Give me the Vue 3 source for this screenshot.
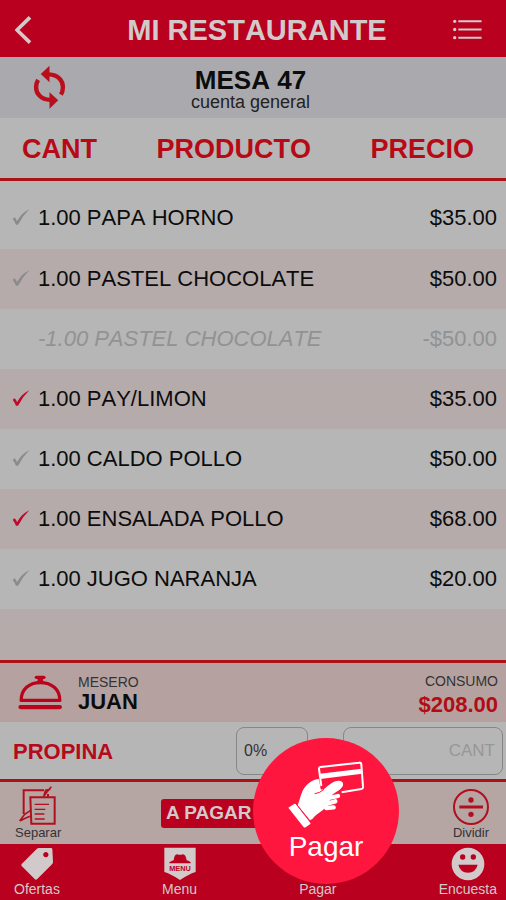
<!-- eslint-disable vue/multi-word-component-names -->
<script setup>

import { ref, reactive } from 'vue'

const restaurant = 'MI RESTAURANTE'

const table = reactive({
  name: 'MESA 47',
  account: 'cuenta general',
  waiter: 'JUAN',
  total: '$208.00',
})

// status: pending, done or cancelled
const items = ref([
  { qty: '1.00', product: 'PAPA HORNO', price: '$35.00', status: 'pending' },
  { qty: '1.00', product: 'PASTEL CHOCOLATE', price: '$50.00', status: 'pending' },
  { qty: '-1.00', product: 'PASTEL CHOCOLATE', price: '-$50.00', status: 'cancelled' },
  { qty: '1.00', product: 'PAY/LIMON', price: '$35.00', status: 'done' },
  { qty: '1.00', product: 'CALDO POLLO', price: '$50.00', status: 'pending' },
  { qty: '1.00', product: 'ENSALADA POLLO', price: '$68.00', status: 'done' },
  { qty: '1.00', product: 'JUGO NARANJA', price: '$20.00', status: 'pending' },
])

const tips = [0, 10, 15, 20]
const tip = ref(0)
const amount = ref('')

</script>




<template>
  <div class="app">

    <header class="topbar">
      <button class="back" type="button" aria-label="Regresar">
        <svg width="18" height="28" viewBox="46 48 54 84">
          <path d="M91 52 L52 90 L91 128" fill="none" stroke="currentColor" stroke-width="11" />
        </svg>
      </button>
      <h1>{{ restaurant }}</h1>
      <button class="list" type="button" aria-label="Opciones">
        <svg width="31" height="21" viewBox="598 54 94 64">
          <path d="M617 61 H688 M617 86 H688 M617 111 H688" stroke="currentColor" stroke-width="6" />
          <g fill="currentColor">
            <circle cx="606" cy="61" r="5" />
            <circle cx="606" cy="86" r="5" />
            <circle cx="606" cy="111" r="5" />
          </g>
        </svg>
      </button>
    </header>

    <section class="mesa">
      <button class="refresh" type="button" aria-label="Actualizar">
        <svg width="35" height="45" viewBox="98 198 104 134">
          <g fill="none" stroke="currentColor" stroke-width="13">
            <path d="M148 226 C176 227 190 245 190 264 Q190 276 184 286" />
            <path d="M152 302 C124 301 110 283 110 264 Q110 252 116 242" />
          </g>
          <path d="M150 200 V249 L124 225 Z M150 279 V328 L176 303 Z" fill="currentColor" />
        </svg>
      </button>
      <div class="mesa-title">
        <h2>{{ table.name }}</h2>
        <p>{{ table.account }}</p>
      </div>
    </section>

    <main class="order">
      <table>
        <thead>
          <tr>
            <th>CANT</th>
            <th>PRODUCTO</th>
            <th>PRECIO</th>
          </tr>
        </thead>
        <tbody>
          <tr v-for="(item, i) in items" :key="i" :class="item.status">
            <td class="qty">
              <span class="check">
                <svg v-if="item.status !== 'cancelled'" width="18" height="18" viewBox="36 55 54 54">
                  <path d="M38 87 L44 83 Q49 87 51 95 Q66 68 88 59 Q68 78 55 104 Q50 107 47 104 Q44 95 38 87 Z" fill="currentColor" />
                </svg>
              </span>
              {{ item.qty }}
            </td>
            <td class="product">{{ item.product }}</td>
            <td class="price">{{ item.price }}</td>
          </tr>
        </tbody>
      </table>
    </main>

    <section class="summary">
      <svg class="bell" width="46" height="37" viewBox="50 220 138 112">
        <g fill="none" stroke="currentColor" stroke-linecap="round" stroke-linejoin="round">
          <path d="M62 300 C62 266 86 246 120 246 C154 246 179 266 179 300 Z" stroke-width="10" />
          <path d="M60 320 H179" stroke-width="13" />
          <path d="M108 230 H131" stroke-width="10" />
          <path d="M120 230 V244" stroke-width="17" stroke-linecap="butt" />
        </g>
      </svg>
      <div class="waiter">
        <span>MESERO</span>
        <strong>{{ table.waiter }}</strong>
      </div>
      <div class="total">
        <span>CONSUMO</span>
        <strong>{{ table.total }}</strong>
      </div>
    </section>

    <section class="tip">
      <label for="tip">PROPINA</label>
      <select id="tip" v-model="tip">
        <option v-for="t in tips" :key="t" :value="t">{{ t }}%</option>
      </select>
      <input v-model="amount" type="text" placeholder="CANT" aria-label="Cantidad de propina">
    </section>

    <section class="actions">
      <button class="action" type="button">
        <svg width="40" height="40" viewBox="60 45 120 120">
          <g fill="none" stroke="currentColor" stroke-width="6">
            <path d="M77 132 V61 H138 M150 80 V72" />
            <path d="M97 82 H170 V161 H100 Z" />
            <path d="M110 103 H153 M110 118 H142 M110 132 H139 M110 147 H140" stroke-width="4" />
            <path d="M160 50 L151 61 L136 80 M157 58 L143 61 L138 76" stroke-width="5" />
            <path d="M65 153 L80 133 L97 122 M67 152 L82 145 L96 139" stroke-width="5" />
          </g>
        </svg>
        <span>Separar</span>
      </button>
      <button class="to-pay" type="button">A PAGAR</button>
      <button class="action" type="button">
        <svg width="40" height="40" viewBox="153 45 120 120">
          <circle cx="213" cy="111" r="51" fill="none" stroke="currentColor" stroke-width="6" />
          <path d="M178 111 H249" stroke="currentColor" stroke-width="9" />
          <circle cx="213" cy="90" r="8" fill="currentColor" />
          <circle cx="213" cy="133" r="8" fill="currentColor" />
        </svg>
        <span>Dividir</span>
      </button>
    </section>

    <nav class="bottom-nav">
      <a href="#ofertas">
        <svg width="34" height="34" viewBox="56 234 102 102">
          <path d="M61 285 L106 240 Q109 237 113 237 H149 Q153 237 153 241 L155 279 Q155 283 152 286 L107 331 Q103 334 100 330 L61 291 Q59 288 61 285 Z M133 249 a8 8 0 1 0 1 0 Z" fill="currentColor" fill-rule="evenodd" />
        </svg>
        <span>Ofertas</span>
      </a>
      <a href="#menu">
        <svg width="34" height="34" viewBox="104 236 102 102">
          <path d="M108 238 H202 V311 Q180 318 155 335 Q130 318 108 311 Z" fill="currentColor" />
          <path class="cut" d="M136 276 Q138 257 147 258 Q155 261 163 258 Q172 257 175 276 Q182 278 187 282 V285 H123 V282 Q130 278 136 276 Z" />
          <text class="cut" x="155" y="307" text-anchor="middle">MENU</text>
        </svg>
        <span>Menu</span>
      </a>
      <a href="#pagar">
        <svg width="34" height="34" viewBox="0 0 34 34">
          <rect x="4" y="8" width="26" height="18" rx="3" fill="currentColor" />
        </svg>
        <span>Pagar</span>
      </a>
      <a href="#encuesta">
        <svg width="34" height="34" viewBox="155 234 102 102">
          <circle cx="206" cy="285" r="49" fill="currentColor" />
          <g class="cut">
            <circle cx="190" cy="264" r="8" />
            <circle cx="222" cy="264" r="8" />
            <path d="M177 287 H235 Q229 311 206 311 Q183 311 177 287 Z" />
          </g>
        </svg>
        <span>Encuesta</span>
      </a>
    </nav>

    <button class="pay" type="button">
      <svg width="78" height="70" viewBox="130 90 234 210">
        <!-- card -->
        <path d="M233 168 L226 117 Q225 112 231 111 L346 98 Q352 97 353 103 L358 170 Q359 176 353 177 L294 187" fill="none" stroke="currentColor" stroke-width="6" />
        <path d="M228 131 L354 116 L355 131 L230 147 Z" fill="currentColor" />
        <!-- fingers behind the card -->
        <g fill="none" stroke="currentColor" stroke-width="13" stroke-linecap="round">
          <path d="M250 205 L283 198" />
          <path d="M250 221 L275 214" />
          <path d="M248 234 L270 232" />
        </g>
        <!-- hand -->
        <path d="M162 226 C170 206 172 186 184 171 C194 158 209 148 226 147 L231 178 Q238 180 245 174 C256 164 269 153 284 152 C298 151 302 163 295 172 C287 183 273 188 265 195 C258 203 259 216 253 226 C240 242 219 250 207 266 L199 271 Z" fill="currentColor" />
        <path class="line" d="M213 191 Q228 190 241 178" />
        <path d="M134 233 L151 222 Q155 220 158 224 L200 277 Q202 281 199 283 L186 292 Q182 294 179 290 Z" fill="currentColor" />
        <path class="line" d="M157 221 L202 279" />
      </svg>
      <span>Pagar</span>
    </button>

  </div>
</template>




<style>

  body {
    margin: 0;
    background: #b6b6b6;
  }

</style>

<style scoped>

  .app {
    --red: #b9001f;
    --line: #ab1218;
    --light: #d2caca;
    position: relative;
    display: flex;
    flex-direction: column;
    min-height: 100vh;
    background: #b6b6b6;
    color: #0c0c0c;
    font-family: "Liberation Sans", Arial, sans-serif;
    font-kerning: none;
  }

  h1, h2, p {
    margin: 0;
  }

  button {
    padding: 0;
    border: 0;
    background: none;
    color: inherit;
    font-family: inherit;
    cursor: pointer;
  }

  svg {
    display: block;
  }

  .topbar {
    display: grid;
    grid-template-columns: 1fr auto 1fr;
    align-items: center;
    height: 57px;
    padding: 2px 7px 0 15px;
    box-sizing: border-box;
    background: var(--red);
    color: var(--light);

    h1 {
      font-size: 29px;
      line-height: 32px;
    }

    .back {
      justify-self: start;
    }

    .list {
      justify-self: end;
      padding-right: 16px;
    }
  }

  .mesa {
    display: grid;
    grid-template-columns: 1fr auto 1fr;
    align-items: center;
    height: 61px;
    padding-right: 5px;
    background: #aaaaae;

    .refresh {
      justify-self: start;
      padding-left: 32px;
      color: #b90f1c;
    }

    .mesa-title {
      padding-top: 2px;
      text-align: center;
    }

    h2 {
      font-size: 26px;
      line-height: 26px;
    }

    p {
      font-size: 18px;
      line-height: 18px;
      color: #222;
    }
  }

  .order {
    flex: 1;
    background: #b5abab;

    table {
      display: block;
    }

    thead, tbody {
      display: block;
    }

    tr {
      display: flex;
      align-items: center;
      box-sizing: border-box;
    }

    th, td {
      padding: 0;
    }

    thead tr {
      justify-content: space-between;
      height: 63px;
      padding: 2px 32px 0 22px;
      border-bottom: 3px solid var(--line);
      background: #b6b6b6;
      color: #b60b16;
      font-size: 27px;
    }

    tbody tr {
      gap: 6px;
      height: 60px;
      padding: 0 9px 0 12px;
      background: #b5abab;
      font-size: 22px;

      &:nth-child(odd) {
        background: #b6b6b6;
      }

      &:first-child {
        height: 68px;
        padding-top: 6px;
      }
    }

    .qty {
      display: flex;
      align-items: center;
    }

    .check {
      width: 26px;
      padding-bottom: 2px;
      color: #8b8b8b;
    }

    .product {
      flex: 1;
    }

    .done .check {
      color: #c00a2c;
    }

    .cancelled {
      color: #929292;

      .qty, .product {
        font-style: italic;
      }
    }
  }

  .summary {
    display: flex;
    align-items: center;
    height: 59px;
    padding: 0 8px 0 17px;
    border-top: 3px solid var(--line);
    background: #b5a2a0;

    .bell {
      color: #b9041c;
    }

    .waiter, .total {
      display: flex;
      flex-direction: column;
      padding-top: 2px;
    }

    .waiter {
      padding-left: 15px;
    }

    .total {
      gap: 4px;
      padding-top: 4px;
      margin-left: auto;
      text-align: right;

      strong {
        color: #b20c15;
      }
    }

    span {
      font-size: 14px;
      line-height: 16px;
      color: #333;
    }

    strong {
      font-size: 22px;
      line-height: 24px;
    }
  }

  .tip {
    display: flex;
    align-items: center;
    height: 57px;
    padding: 0 3px 0 13px;

    label {
      margin-right: auto;
      padding-top: 2px;
      font-size: 22px;
      font-weight: bold;
      color: #b6091a;
    }

    select, input {
      height: 48px;
      padding: 0 7px;
      box-sizing: border-box;
      border: 1px solid #858888;
      border-radius: 8px;
      background: transparent;
      color: #333;
      font-family: inherit;
      appearance: none;
    }

    select {
      width: 72px;
      margin-right: 35px;
      font-size: 16px;
    }

    input {
      width: 160px;
      font-size: 17px;
      text-align: right;

      &::placeholder {
        color: #979797;
        opacity: 1;
      }
    }
  }

  .actions {
    display: flex;
    align-items: center;
    justify-content: space-between;
    height: 62px;
    padding: 0 15px;
    border-top: 3px solid var(--line);
    background: #b5a5a3;

    .action {
      display: flex;
      flex-direction: column;
      align-items: center;
      color: #b30e1e;
    }

    span {
      font-size: 13px;
      line-height: 16px;
      color: #333;
    }

    .to-pay {
      width: 40%;
      height: 29px;
      padding-left: 5px;
      border-radius: 3px;
      background: var(--red);
      color: var(--light);
      font-size: 19px;
      font-weight: bold;
      text-align: left;
    }
  }

  .bottom-nav {
    display: flex;
    align-items: center;
    justify-content: space-between;
    height: 56px;
    padding: 0 9px 0 14px;
    background: var(--red);

    a {
      display: flex;
      flex-direction: column;
      align-items: center;
      color: var(--light);
      font-size: 14px;
      line-height: 16px;
      text-decoration: none;
    }

    .cut {
      fill: var(--red);
    }

    text {
      font-size: 22px;
      font-weight: bold;
    }
  }

  /* highlighted button that floats over the footer */
  .pay {
    position: absolute;
    bottom: 16px;
    left: 50%;
    display: flex;
    flex-direction: column;
    align-items: center;
    width: 146px;
    height: 146px;
    padding-top: 22px;
    border-radius: 50%;
    background: #fe163f;
    color: #fff;
    font-size: 28px;
    line-height: 34px;

    .line {
      fill: none;
      stroke: #fe163f;
      stroke-width: 3;
    }
  }

</style>
